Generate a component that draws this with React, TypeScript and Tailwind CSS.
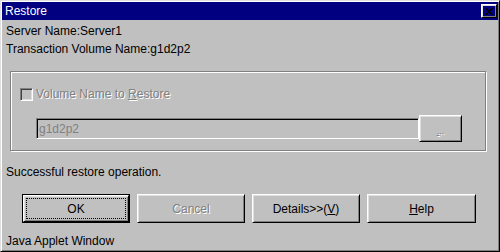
import React from 'react';

const raised =
  'border border-t-white border-l-white border-r-black border-b-black shadow-[inset_1px_1px_#dfdfdf,inset_-1px_-1px_#808080]';

function Btn({
  children,
  disabled,
  isDefault,
  className = '',
}: {
  children: React.ReactNode;
  disabled?: boolean;
  isDefault?: boolean;
  className?: string;
}) {
  if (isDefault) {
    return (
      <div className={`border border-black ${className}`}>
        <div className={`h-full ${raised} p-[2px]`}>
          <div className="flex h-full items-center justify-center border border-dotted border-black">
            {children}
          </div>
        </div>
      </div>
    );
  }
  return (
    <div
      className={`flex items-center justify-center ${raised} ${
        disabled ? 'text-[#808080] [text-shadow:1px_1px_#ffffff]' : 'text-black'
      } ${className}`}
    >
      {children}
    </div>
  );
}

export default function App() {
  return (
    <div
      className="flex h-[252px] w-[500px] flex-col border border-t-[#dfdfdf] border-l-[#dfdfdf] border-r-black border-b-black bg-[#c0c0c0] p-[1px] text-[12px] leading-[14px] text-black shadow-[inset_1px_1px_#ffffff,inset_-1px_-1px_#808080]"
      style={{ fontFamily: '"Liberation Sans", Arial, sans-serif' }}
    >
      {/* title bar */}
      <div className="flex h-[18px] items-center justify-between bg-[#000080] pl-[3px] pr-[1px]">
        <span className="text-white">Restore</span>
        <div className={`flex h-[14px] w-[16px] items-center justify-center ${raised}`}>
          <svg width="8" height="7" viewBox="0 0 8 7" shapeRendering="crispEdges">
            <path
              d="M0 0h2v1h-2zM6 0h2v1h-2zM1 1h2v1h-2zM5 1h2v1h-2zM2 2h4v1h-4zM3 3h2v1h-2zM2 4h4v1h-4zM1 5h2v1h-2zM5 5h2v1h-2zM0 6h2v1h-2zM6 6h2v1h-2z"
              fill="#000"
            />
          </svg>
        </div>
      </div>

      <div className="flex flex-1 flex-col px-[4px]">
        <div className="mt-[4px]">Server Name:Server1</div>
        <div className="mt-[4px]">Transaction Volume Name:g1d2p2</div>

        {/* group box */}
        <div className="ml-[4px] mr-[8px] mt-[15px] h-[80px] border border-[#808080] shadow-[1px_1px_#ffffff,inset_1px_1px_#ffffff]">
          <div className="ml-[9px] mt-[15px] flex items-center gap-[3px]">
            <div className="h-[13px] w-[13px] border border-t-[#808080] border-l-[#808080] border-r-white border-b-white bg-[#c0c0c0] shadow-[inset_1px_1px_#404040,inset_-1px_-1px_#dfdfdf]" />
            <span className="text-[#808080] [text-shadow:1px_1px_#ffffff]">
              Volume Name to <u>R</u>estore
            </span>
          </div>
          <div className="ml-[25px] mt-[14px] flex items-center">
            <div className="flex h-[21px] w-[383px] items-center border border-t-[#808080] border-l-[#808080] border-r-white border-b-white pl-[2px] text-[#808080] shadow-[inset_1px_1px_#000000,inset_-1px_-1px_#c0c0c0]">
              g1d2p2
            </div>
            <Btn disabled className="h-[27px] w-[43px] pt-[6px] text-[9px] leading-[9px]">
              <span>
                <u>.</u>..
              </span>
            </Btn>
          </div>
        </div>

        <div className="mt-[14px]">Successful restore operation.</div>

        <div className="ml-[16px] mt-[15px] flex gap-[7px]">
          <Btn isDefault className="h-[29px] w-[108px]">
            OK
          </Btn>
          <Btn disabled className="h-[29px] w-[108px]">
            Cancel
          </Btn>
          <Btn className="h-[29px] w-[108px]">
            Details&gt;&gt;(<u>V</u>)
          </Btn>
          <Btn className="h-[29px] w-[109px]">
            <span>
              <u>H</u>elp
            </span>
          </Btn>
        </div>

        <div className="mt-[11px]">Java Applet Window</div>
      </div>
    </div>
  );
}
